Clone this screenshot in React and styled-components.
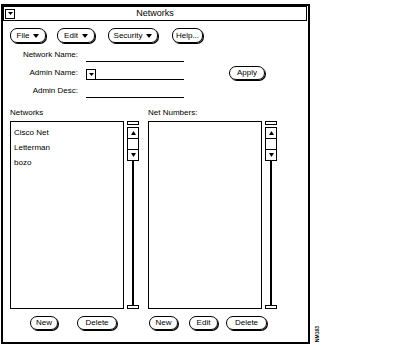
import styled, { createGlobalStyle } from "styled-components";

const GlobalStyle = createGlobalStyle`
  body {
    margin: 0;
    background: #fff;
    color: #000;
    font-family: "Liberation Sans", Arial, sans-serif;
    font-size: 8px;
  }
`;

const Page = styled.div`
  display: flex;
  align-items: flex-end;
  padding: 4px 0 0 1px;
`;

const Window = styled.div`
  width: 309px;
  height: 340px;
  border: 2px solid #000;
  box-sizing: border-box;
  display: flex;
  flex-direction: column;
`;

const TitleBar = styled.div`
  height: 15px;
  margin-right: 1px;
  border: 1px solid #000;
  box-sizing: border-box;
  display: grid;
  grid-template-columns: 1fr auto 1fr;
  align-items: center;
`;

const Title = styled.div`
  font-size: 9px;
  line-height: 13px;
`;

const SmallBox = styled.div`
  width: 10px;
  height: ${(p) => p.$h || 10}px;
  border: 1px solid #000;
  box-sizing: border-box;
  display: flex;
  align-items: center;
  justify-content: center;
  margin-left: ${(p) => p.$ml || 0}px;
  background: #fff;
`;

const MenuRow = styled.div`
  display: flex;
  padding: 7px 0 0 7px;
`;

const Pill = styled.div`
  width: ${(p) => p.$w}px;
  height: ${(p) => p.$h || 14}px;
  margin-left: ${(p) => p.$ml || 0}px;
  border: 1px solid #000;
  border-radius: 7px;
  box-shadow: 1px 1px 0 #000;
  box-sizing: border-box;
  display: flex;
  align-items: center;
  justify-content: center;
  gap: 4px;
  font-size: 8px;
  line-height: 10px;
  flex-shrink: 0;
`;

const Form = styled.div`
  display: grid;
  grid-template-columns: 75px 98px 1fr;
  grid-auto-rows: 14px;
  column-gap: 8px;
  row-gap: 4px;
  margin-top: 5px;
`;

const Label = styled.div`
  text-align: right;
  line-height: 14px;
  font-size: 8px;
`;

const Field = styled.div`
  height: 14px;
  border-bottom: 1px solid #000;
  box-sizing: border-box;
  display: flex;
  align-items: flex-end;
`;

const ApplyCell = styled.div`
  display: flex;
  margin-left: 37px;
`;

const Lists = styled.div`
  display: grid;
  grid-template-columns: 129px 129px;
  column-gap: 9px;
  padding-left: 7px;
  margin-top: 9px;
`;

const Column = styled.div`
  display: flex;
  flex-direction: column;
`;

const ColLabel = styled.div`
  height: 12px;
  line-height: 12px;
  margin-bottom: 2px;
`;

const BoxRow = styled.div`
  display: flex;
  height: 188px;
`;

const ListBox = styled.div`
  width: 114px;
  border: 1px solid #000;
  box-sizing: border-box;
  padding: 3px 0 0 3px;
`;

const Item = styled.div`
  line-height: 15px;
  height: 15px;
`;

const Scroll = styled.div`
  width: 12px;
  margin-left: 3px;
  display: flex;
  flex-direction: column;
  align-items: center;
`;

const Cap = styled.div`
  width: 12px;
  height: 4px;
  border: 1px solid #000;
  box-sizing: border-box;
  flex-shrink: 0;
`;

const Stack = styled.div`
  width: 12px;
  margin: 2px 0 0;
  border: 1px solid #000;
  box-sizing: border-box;
  flex-shrink: 0;
`;

const Cell = styled.div`
  height: 10px;
  display: flex;
  align-items: center;
  justify-content: center;
  & + & {
    border-top: 1px solid #000;
  }
`;

const Track = styled.div`
  width: 2px;
  flex: 1;
  background: #000;
`;

const ButtonRow = styled.div`
  display: flex;
  margin-top: 7px;
`;

const Caption = styled.div`
  writing-mode: vertical-rl;
  transform: rotate(180deg);
  font-size: 5px;
  font-weight: bold;
  letter-spacing: 0;
  margin: 0 0 2px 5px;
  line-height: 4px;
`;

const Arrow = ({ up, w = 6, h = 4 }) => (
  <svg width={w} height={h} viewBox={`0 0 ${w} ${h}`} style={{ display: "block" }}>
    <polygon
      points={up ? `0,${h} ${w},${h} ${w / 2},0` : `0,0 ${w},0 ${w / 2},${h}`}
      fill="#000"
    />
  </svg>
);

const ScrollBar = () => (
  <Scroll>
    <Cap />
    <Stack>
      <Cell>
        <Arrow up w={5} h={4} />
      </Cell>
      <Cell />
      <Cell>
        <Arrow w={5} h={4} />
      </Cell>
    </Stack>
    <Track />
    <Cap />
  </Scroll>
);

const App = () => {
  return (
    <>
      <GlobalStyle />
      <Page>
        <Window>
          <TitleBar>
            <SmallBox $ml={1}>
              <Arrow w={5} h={3} />
            </SmallBox>
            <Title>Networks</Title>
            <div />
          </TitleBar>

          <MenuRow>
            <Pill $w={36} $h={15}>
              File <Arrow w={6} h={4} />
            </Pill>
            <Pill $w={38} $h={15} $ml={11}>
              Edit <Arrow w={6} h={4} />
            </Pill>
            <Pill $w={50} $h={15} $ml={13}>
              Security <Arrow w={6} h={4} />
            </Pill>
            <Pill $w={31} $h={15} $ml={14}>
              Help...
            </Pill>
          </MenuRow>

          <Form>
            <Label>Network Name:</Label>
            <Field />
            <div />
            <Label>Admin Name:</Label>
            <Field>
              <SmallBox $h={11} style={{ marginBottom: -1 }}>
                <Arrow w={5} h={3} />
              </SmallBox>
            </Field>
            <ApplyCell>
              <Pill $w={36}>Apply</Pill>
            </ApplyCell>
            <Label>Admin Desc:</Label>
            <Field />
            <div />
          </Form>

          <Lists>
            <Column>
              <ColLabel>Networks</ColLabel>
              <BoxRow>
                <ListBox>
                  <Item>Cisco Net</Item>
                  <Item>Letterman</Item>
                  <Item>bozo</Item>
                </ListBox>
                <ScrollBar />
              </BoxRow>
              <ButtonRow>
                <Pill $w={28} $ml={20}>New</Pill>
                <Pill $w={40} $ml={19}>Delete</Pill>
              </ButtonRow>
            </Column>
            <Column>
              <ColLabel>Net Numbers:</ColLabel>
              <BoxRow>
                <ListBox />
                <ScrollBar />
              </BoxRow>
              <ButtonRow>
                <Pill $w={29} $ml={1}>New</Pill>
                <Pill $w={29} $ml={11}>Edit</Pill>
                <Pill $w={41} $ml={8}>Delete</Pill>
              </ButtonRow>
            </Column>
          </Lists>
        </Window>
        <Caption>NM103</Caption>
      </Page>
    </>
  );
};

export default App;
